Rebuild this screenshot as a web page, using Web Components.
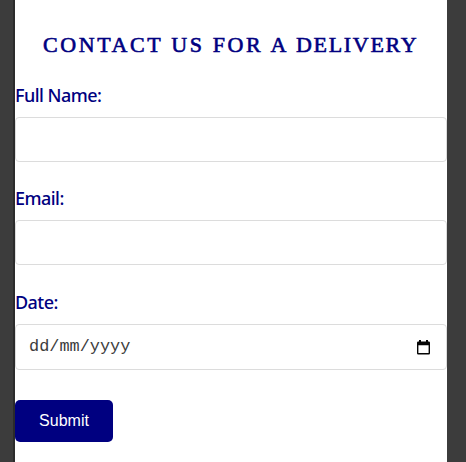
<!DOCTYPE html>
<html lang="en"><head><meta charset="utf-8"><title>Contact us for a delivery</title>
<style>html,body{margin:0;height:100%;overflow:hidden;background:#3c3c3c}</style></head><body>
<delivery-form></delivery-form>
<script>
const define = (name, html) => customElements.define(name, class extends HTMLElement {
  constructor(){ super(); this.attachShadow({mode:'open'}).innerHTML = html; }
});
define('form-title', `<style>
:host{display:block;height:82px;box-sizing:border-box;padding:32px 0 0 28px;white-space:nowrap;color:#000080;font:22px/25px "Liberation Serif",serif;letter-spacing:2.6px;word-spacing:.15px;-webkit-text-stroke:.6px #000080}
::slotted(span){letter-spacing:1.7px}
</style><slot></slot>`);
define('form-field', `<style>
:host{display:block;height:103.4px;color:#000080}
.label{height:35px;font:500 18px/26px "Noto Sans",sans-serif;letter-spacing:-.54px;white-space:nowrap}
.box{box-sizing:border-box;height:var(--box-height,44.5px);border:1px solid #dcdcdc;border-radius:4px;background:#fff;display:flex;align-items:center;justify-content:space-between;padding:0 16px 0 13px}
</style><div class="label"><slot name="label"></slot></div><div class="box"><slot></slot></div>`);
define('date-text', `<style>
:host{display:block;font:16.9px/20px "Liberation Mono",monospace;color:#3c3c3c;white-space:nowrap}
</style><slot></slot>`);
define('calendar-icon', `<style>:host{display:block;width:13px;height:15px}svg{display:block}</style>
<svg width="13" height="15" viewBox="0 0 13 15"><path fill="#050505" fill-rule="evenodd" d="M2 0h2v1.5h5V0h2v1.5h.8q1.2 0 1.2 1.2v10.6q0 1.2-1.2 1.2H1.200Q0 14.500 0 13.300V2.700q0-1.200 1.200-1.200H2zM1.400 5.300v7.800h10.200V5.300z"/></svg>`);
define('submit-button', `<style>
:host{display:block}button{display:block;width:98px;height:42px;padding:0;border:0;border-radius:5px;background:#000080;color:#fff;font:16px/20px "Liberation Sans",sans-serif}
</style><button type="button"><slot></slot></button>`);
define('delivery-form', `<style>
:host{display:block;box-sizing:border-box;width:447px;height:462px;border-left:15px solid #3c3c3c;background:#fff;position:relative}
:host::before{content:"";position:absolute;left:-2px;top:0;bottom:0;width:2px;background:#2b2b2b}
.date{--box-height:46.5px;height:111.2px}
.stack{display:flex;flex-direction:column}
.stack>*{flex:none}
</style><div class="stack">
<form-title>CONTACT US FOR A <span>DELIVERY</span></form-title>
<form-field><span slot="label">Full Name:</span></form-field>
<form-field><span slot="label">Email:</span></form-field>
<form-field class="date"><span slot="label">Date:</span><date-text>dd/mm/yyyy</date-text><calendar-icon></calendar-icon></form-field>
<submit-button>Submit</submit-button></div>`);
</script></body></html>
